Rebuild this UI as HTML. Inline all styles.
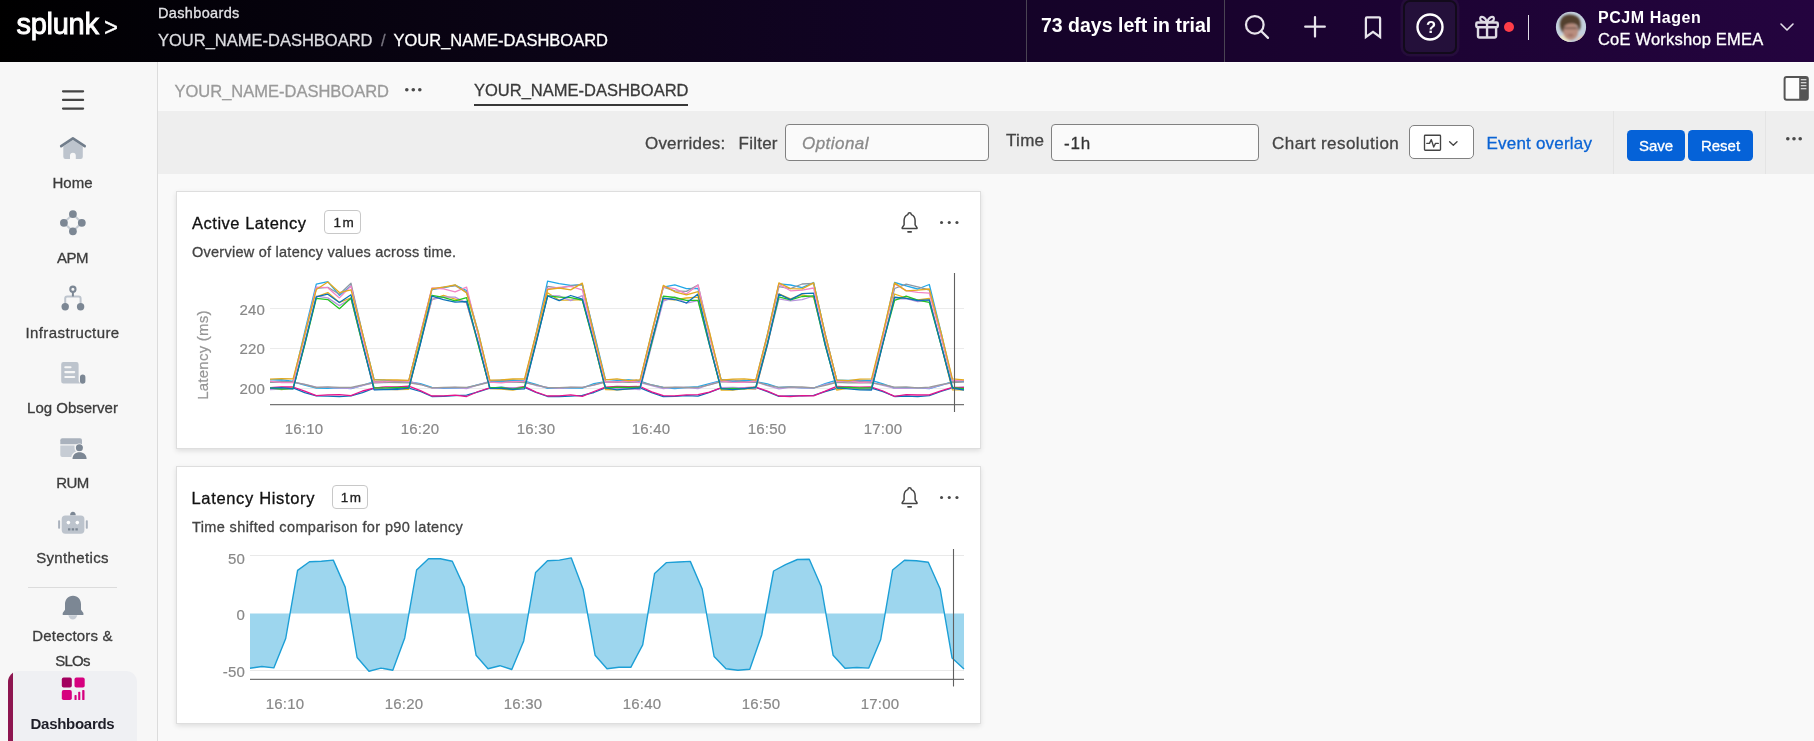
<!DOCTYPE html>
<html lang="en">
<head>
<meta charset="utf-8">
<title>YOUR_NAME-DASHBOARD</title>
<style>
*{box-sizing:border-box;margin:0;padding:0}
html,body{width:1814px;height:741px;overflow:hidden;background:#f9f9f9;font-family:"Liberation Sans",sans-serif;color:#3c3c3c}
.abs{position:absolute}
.t{position:absolute;white-space:nowrap;line-height:1;-webkit-text-stroke:.3px currentColor}
#hdr{position:absolute;left:0;top:0;width:1814px;height:62px;background:linear-gradient(90deg,#000 0%,#030108 10%,#0b0416 30%,#120325 50%,#18032c 65%,#1d0334 80%,#24043f 100%)}
#side{position:absolute;left:0;top:62px;width:158px;height:679px;background:#f7f7f7;border-right:1px solid #dcdcdc}
.nav{position:absolute;left:0;width:145px;text-align:center;font-size:15px;color:#3c3c3c;line-height:1;white-space:nowrap;-webkit-text-stroke:.3px currentColor}
#fbar{position:absolute;left:158px;top:111px;width:1656px;height:63px;background:#eeeeee}
.panel{position:absolute;left:176px;width:805px;background:#fff;border:1px solid #dedede;box-shadow:0 2px 5px rgba(0,0,0,.11)}
.inp{position:absolute;background:#fff;border:1px solid #818181;border-radius:4px}
.btn{-webkit-text-stroke:.3px #fff;position:absolute;background:#0562d8;border-radius:4.500px;color:#fff;font-size:15px;text-align:center}
.ax{font-size:15px;fill:#888;stroke:#888;stroke-width:.2px;letter-spacing:.15px;font-family:"Liberation Sans",sans-serif}
</style>
</head>
<body>
<div id="root" style="position:absolute;left:0;top:0;width:1814px;height:741px;will-change:transform">
<!-- HEADER -->
<div id="hdr">
  <div class="t" id="logo" style="left:16.600px;top:10.200px;font-size:29px;color:#fff;letter-spacing:-0.3px;-webkit-text-stroke:0.9px #fff">splunk</div>
  <div class="t" id="logogt" style="left:103.800px;top:12.300px;font-size:30px;color:#fff;transform-origin:0 50%;transform:scale(.8,.86);-webkit-text-stroke:0.4px #fff">&gt;</div>
  <div class="t" id="h1" style="left:158px;top:6px;font-size:14.5px;color:#e2e2e6;letter-spacing:0.35px">Dashboards</div>
  <div class="t" id="h2" style="left:158px;top:31.500px;font-size:16.5px;color:#dcdce0">YOUR_NAME-DASHBOARD</div>
  <div class="t" id="h3" style="left:381px;top:31.500px;font-size:16.5px;color:#77747f">/</div>
  <div class="t" id="h4" style="left:393.5px;top:31.500px;font-size:16.5px;color:#fff">YOUR_NAME-DASHBOARD</div>
  <div class="abs" style="left:1026px;top:0;width:1px;height:62px;background:#4a4453"></div>
  <div class="abs" style="left:1224px;top:0;width:1px;height:62px;background:#4a4453"></div>
  <div class="t" id="trial" style="-webkit-text-stroke:0;left:1041px;top:16.300px;font-size:19.5px;font-weight:bold;color:#fff">73 days left in trial</div>
  <!-- search / plus / bookmark -->
  <svg class="abs" style="left:1236px;top:6px" width="156" height="42" viewBox="1236 6 156 42" fill="none" stroke="#e8e5ec" stroke-width="2.250" stroke-linecap="round" stroke-linejoin="round">
    <circle cx="1254.800" cy="24.800" r="8.800"/><path d="M1261.300 31.300L1268 37.900"/>
    <path d="M1315 17V36.500M1305.200 26.700H1324.800"/>
    <path d="M1366.900 17.400H1379.100a1 1 0 0 1 1 1V37L1373 31.800L1365.900 37V18.400a1 1 0 0 1 1-1Z" stroke-linejoin="miter"/>
  </svg>
  <!-- help -->
  <div class="abs" style="left:1403px;top:0;width:54px;height:54px;background:#24103a;border:2px solid #120a1b;border-radius:7px;box-shadow:0 0 0 2.500px rgba(255,255,255,.045)"></div>
  <svg class="abs" style="left:1415.400px;top:12px" width="30" height="30" viewBox="0 0 30 30" fill="none" stroke="#fff" stroke-width="2.4"><circle cx="15" cy="15" r="12.5"/></svg>
  <div class="t" style="left:1426px;top:18.800px;font-size:16.500px;font-weight:bold;color:#fff;-webkit-text-stroke:0">?</div>
  <!-- gift -->
  <svg class="abs" style="left:1470px;top:10px" width="34" height="34" viewBox="1470 10 34 34" fill="none" stroke="#dedbe4" stroke-width="2.400" stroke-linejoin="round" stroke-linecap="round"><rect x="1476.300" y="22.500" width="21.500" height="4.800" rx="1.200"/><path d="M1478 27.300V36a1.500 1.500 0 0 0 1.500 1.500H1494.600a1.500 1.500 0 0 0 1.500-1.500V27.300M1487.050 22.500V37.500"/><path d="M1487 22.300C1485 16.400 1480.200 15.300 1480.200 18.800C1480.200 21.300 1483.800 22.300 1487 22.300ZM1487.100 22.300C1489.100 16.400 1493.900 15.300 1493.900 18.800C1493.900 21.300 1490.300 22.300 1487.100 22.300Z" stroke-width="2.200"/></svg>
  <div class="abs" style="left:1503.700px;top:21.800px;width:10.200px;height:10.200px;border-radius:50%;background:#ff3d48"></div>
  <div class="abs" style="left:1527.600px;top:15px;width:1.600px;height:25px;background:#e0dce6"></div>
  <!-- avatar -->
  <svg class="abs" style="left:1553px;top:9px" width="36" height="36" viewBox="1553 9 36 36">
    <defs><clipPath id="avc"><circle cx="1571" cy="26.900" r="15.100"/></clipPath><filter id="avb" x="-20%" y="-20%" width="140%" height="140%"><feGaussianBlur stdDeviation="1.05"/></filter></defs>
    <g clip-path="url(#avc)">
      <rect x="1553" y="9" width="36" height="36" fill="#c4d1de"/>
      <g filter="url(#avb)">
        <path d="M1555 37L1566 34.500L1572 46H1555Z" fill="#ece6cc"/>
        <path d="M1578 37.500L1588 34V46H1574Z" fill="#e6c3ae"/>
        <ellipse cx="1570.600" cy="31.200" rx="7.600" ry="8.800" fill="#b98d7e"/>
        <path d="M1560.300 27.500C1558.600 21 1562 15 1568.500 14.600C1575.500 14 1580.800 17.500 1580.600 24C1581.200 27 1580 30 1578.400 31.500C1578.800 27.500 1577.500 24.800 1574 23.800C1570 22.800 1565.500 24.200 1564.200 27C1563.300 29 1563.300 31 1563.600 33C1561.600 31.500 1560.800 29.500 1560.300 27.500Z" fill="#52402f"/>
        <path d="M1563.800 28.200H1577.200" stroke="#4a3732" stroke-width="1.100" fill="none"/>
        <ellipse cx="1570.500" cy="35.300" rx="3" ry="1" fill="#94655c"/>
      </g>
    </g>
  </svg>
  <div class="t" id="uname" style="-webkit-text-stroke:0;left:1598px;top:9.500px;font-size:16px;font-weight:bold;color:#fff;letter-spacing:0.55px">PCJM Hagen</div>
  <div class="t" id="uorg" style="left:1598px;top:30.800px;font-size:16.5px;color:#fff;letter-spacing:0.2px">CoE Workshop EMEA</div>
  <svg class="abs" style="left:1779.400px;top:21.200px" width="16" height="12" viewBox="0 0 16 12" fill="none" stroke="#e4e0ea" stroke-width="1.6" stroke-linecap="round" stroke-linejoin="round"><path d="M2 3l6 6 6-6"/></svg>
</div>

<div class="abs" style="left:0;top:62px;width:1814px;height:1px;background:#fdfdfd"></div>
<!-- SIDEBAR -->
<div id="side"></div>
<svg class="abs" style="left:56px;top:84px" width="34" height="32" viewBox="56 84 34 32" stroke="#444" stroke-width="2.200" stroke-linecap="round"><path d="M63 91.300H83.100M63 99.900H83.100M63 108.600H83.100"/></svg>
<div class="nav" style="top:175px"><span id="n0">Home</span></div>
<div class="nav" style="top:250px"><span id="n1" style="letter-spacing:-0.5px">APM</span></div>
<div class="nav" style="top:325px"><span id="n2" style="letter-spacing:0.42px">Infrastructure</span></div>
<div class="nav" style="top:400px"><span id="n3">Log Observer</span></div>
<div class="nav" style="top:475px"><span id="n4" style="letter-spacing:-0.5px">RUM</span></div>
<div class="nav" style="top:550px"><span id="n5" style="letter-spacing:0.35px">Synthetics</span></div>
<div class="abs" style="left:28px;top:587px;width:89px;height:1px;background:#dcdcdc"></div>
<div class="nav" style="top:628px"><span id="n6" style="letter-spacing:0.2px">Detectors &amp;</span></div>
<div class="nav" style="top:653px"><span id="n7" style="letter-spacing:-0.7px">SLOs</span></div>
<div class="abs" style="left:8px;top:671px;width:129px;height:82px;background:#eff0f3;border-radius:11px;overflow:hidden"><div class="abs" style="left:0;top:0;width:5px;height:82px;background:#8e1650"></div></div>
<div class="nav" style="top:716px;font-weight:bold;color:#1e1e28;-webkit-text-stroke:0"><span id="n8" style="letter-spacing:-0.28px">Dashboards</span></div>
<svg class="abs" style="left:0;top:62px" width="158" height="679" viewBox="0 62 158 679">
  <!-- home -->
  <path d="M63.300 146.500V156.800a2.200 2.200 0 0 0 2.200 2.200H70v-3.400a2.900 2.900 0 0 1 5.800 0V159h4.800a2.200 2.200 0 0 0 2.200-2.200V146.500L72.900 140z" fill="#bdc4cd"/>
  <path d="M61.200 146.200L72.900 138.400L84.700 146.200" fill="none" stroke="#717d8b" stroke-width="2.600" stroke-linecap="round" stroke-linejoin="round"/>
  <!-- apm -->
  <path d="M72.900 214.100L63.800 222.800L72.900 231.300L81.800 222.800Z" fill="none" stroke="#c6ccd4" stroke-width="2"/>
  <g fill="#7c8794"><circle cx="72.900" cy="214.100" r="3.900"/><circle cx="63.900" cy="222.800" r="3.900"/><circle cx="81.800" cy="222.800" r="3.900"/><circle cx="72.900" cy="231.300" r="3.900"/></g>
  <!-- infrastructure -->
  <path d="M65.200 304V298.500a2 2 0 0 1 2-2H78.600a2 2 0 0 1 2 2V304" fill="none" stroke="#bdc4cd" stroke-width="2"/>
  <path d="M72.900 292V296.500" stroke="#7c8794" stroke-width="2"/>
  <circle cx="72.900" cy="289.200" r="2.600" fill="#f7f7f7" stroke="#7c8794" stroke-width="2.100"/>
  <g fill="#7c8794"><circle cx="65.200" cy="306.800" r="3.700"/><circle cx="80.600" cy="306.800" r="3.700"/></g>
  <!-- log observer -->
  <path d="M63.400 362h13a2.200 2.200 0 0 1 2.200 2.200V380a3.400 3.400 0 0 0 3.400 3.400H63.400a2.200 2.200 0 0 1-2.200-2.200V364.200a2.200 2.200 0 0 1 2.200-2.200z" fill="#bdc4cd"/>
  <path d="M82.700 374.600a2.700 2.700 0 0 1 2.700 2.700V381a2.700 2.700 0 0 1-5.400 0V377.300a2.700 2.700 0 0 1 2.700-2.700z" fill="#7c8794"/>
  <g stroke="#f7f7f7" stroke-width="2.100" stroke-linecap="round"><path d="M65.300 367.200H70.500M65.300 372.100H74.200M65.300 377H74.200"/></g>
  <!-- rum -->
  <path d="M62.300 438.200H80a2 2 0 0 1 2 2V444.300H60.300V440.200a2 2 0 0 1 2-2z" fill="#aab2bd"/>
  <path d="M60.300 445.400H74.500V448a5.500 5.500 0 0 0 1.500 3.600C73 452.800 71.500 455 71.300 457H62.300a2 2 0 0 1-2-2z" fill="#c6ccd4"/>
  <circle cx="79.400" cy="447.700" r="3.500" fill="#7c8794" stroke="#f7f7f7" stroke-width="1.400" paint-order="stroke"/>
  <path d="M72.500 459C72.500 455 75.500 452.300 79.500 452.300S86.600 455 86.600 459z" fill="#7c8794" stroke="#f7f7f7" stroke-width="1.400" paint-order="stroke"/>
  <!-- synthetics -->
  <rect x="61.700" y="515.500" width="22.700" height="18.200" rx="3.600" fill="#bdc4cd"/>
  <path d="M70.100 515.300a2.800 3.600 0 0 1 5.600 0z" fill="#7c8794"/>
  <rect x="58.100" y="520.200" width="2" height="8.500" rx=".8" fill="#aab2bd"/>
  <rect x="85.800" y="520.200" width="2" height="8.500" rx=".8" fill="#aab2bd"/>
  <circle cx="68.400" cy="522.600" r="1.800" fill="#fff"/><circle cx="77.300" cy="522.600" r="1.800" fill="#fff"/>
  <path d="M68 529.400H70.400M71.700 529.400H74.100M75.400 529.400H77.800" stroke="#7c8794" stroke-width="2.200"/>
  <!-- bell -->
  <path d="M68.300 615.200H77.300C76.500 618 74.800 619.400 72.800 619.400S69.100 618 68.300 615.200z" fill="#c6ccd4"/>
  <path d="M73 595.800c-5 0-8 3.700-8 8.500v5.400l-2.300 3.400v1.800H83.400V613.100l-2.400-3.400V604.300c0-4.800-3-8.500-8-8.500z" fill="#7c8794"/>
  <!-- dashboards -->
  <rect x="61.800" y="677.600" width="10" height="10" rx="1.800" fill="#a3005f"/>
  <rect x="74.500" y="677.600" width="10.200" height="10" rx="1.800" fill="#d6007f"/>
  <rect x="61.800" y="690.100" width="10" height="10" rx="1.800" fill="#d6007f"/>
  <g fill="#d6007f"><rect x="74.500" y="695" width="2.100" height="5.100" rx=".7"/><rect x="78.200" y="691.800" width="2.100" height="8.300" rx=".7"/><rect x="82.200" y="690.100" width="2.300" height="10" rx=".7"/></g>
</svg>


<!-- TABS -->
<div class="t" id="tab1" style="left:174.500px;top:83px;font-size:16.5px;color:#9a9a9a">YOUR_NAME-DASHBOARD</div>
<svg class="abs" style="left:404.30px;top:86.60px" width="18.60" height="5.60" fill="#4a4a4a"><circle cx="2.80" cy="2.80" r="1.80"/><circle cx="9.30" cy="2.80" r="1.80"/><circle cx="15.80" cy="2.80" r="1.80"/></svg>
<div class="t" id="tab2" style="left:474px;top:82px;font-size:16.5px;color:#3a3a3a">YOUR_NAME-DASHBOARD</div>
<div class="abs" style="left:474px;top:104.200px;width:214px;height:1.500px;background:#383838"></div>
<svg class="abs" style="left:1782px;top:74px" width="30" height="30" viewBox="1782 74 30 30"><rect x="1784.600" y="77" width="23.200" height="22.800" rx="2" fill="#fcfcfc" stroke="#555" stroke-width="2"/><path d="M1799.200 77H1806.800a1 1 0 0 1 1 1V98.800a1 1 0 0 1-1 1H1799.200Z" fill="#555"/><path d="M1800.800 79.700H1806.400M1800.800 82.700H1806.400M1800.800 85.700H1806.400M1800.800 88.700H1806.400" stroke="#fcfcfc" stroke-width="1.100"/></svg>

<!-- FILTER BAR -->
<div id="fbar"></div>
<div class="t" id="f1" style="left:645px;top:135px;font-size:17px;color:#444;letter-spacing:0.2px">Overrides:</div>
<div class="t" id="f2" style="left:738.500px;top:135px;font-size:17px;color:#444;letter-spacing:0.25px">Filter</div>
<div class="inp" style="left:785px;top:124px;width:204px;height:37px;background:#fafafa"></div>
<div class="t" id="f3" style="left:802px;top:135px;font-size:17px;font-style:italic;color:#8a8a8a;letter-spacing:0.45px">Optional</div>
<div class="t" id="f4" style="left:1006px;top:132px;font-size:17px;color:#444;letter-spacing:0.3px">Time</div>
<div class="inp" style="left:1051px;top:124px;width:208px;height:37px;background:#fafafa"></div>
<div class="t" id="f5" style="left:1064px;top:135px;font-size:17px;color:#333;letter-spacing:0.8px">-1h</div>
<div class="t" id="f6" style="left:1272px;top:135px;font-size:17px;color:#444;letter-spacing:0.45px">Chart resolution</div>
<div class="inp" style="left:1409px;top:125px;width:65px;height:34px;border-radius:5px"></div>
<svg class="abs" style="left:1420px;top:130px" width="42" height="26" viewBox="1420 130 42 26" fill="none" stroke="#444" stroke-width="1.350" stroke-linejoin="round" stroke-linecap="round"><rect x="1424.500" y="135.200" width="16" height="15" rx=".8"/><path d="M1426.800 143.400H1429.500L1431.300 139.600L1433.700 147L1435.500 143.400H1438.300"/><path d="M1449.600 141.800L1453.300 145.300L1457 141.800"/></svg>
<div class="t" id="f7" style="left:1486.500px;top:135px;font-size:17px;color:#0a63d4;letter-spacing:0.2px">Event overlay</div>
<div class="abs" style="left:1613px;top:111px;width:1px;height:63px;background:#e4e4e4"></div>
<div class="abs" style="left:1765px;top:111px;width:1px;height:63px;background:#e4e4e4"></div>
<div class="btn" style="left:1627px;top:130px;width:58px;height:31px;line-height:31px">Save</div>
<div class="btn" style="left:1688px;top:130px;width:65px;height:31px;line-height:31px">Reset</div>
<svg class="abs" style="left:1784.50px;top:136.30px" width="18.00" height="5.60" fill="#4a4a4a"><circle cx="2.80" cy="2.80" r="1.80"/><circle cx="9.00" cy="2.80" r="1.80"/><circle cx="15.20" cy="2.80" r="1.80"/></svg>

<!-- PANEL 1 -->
<div class="panel" style="top:191px;height:258px"></div>
<div class="t" id="p1t" style="left:192px;top:215px;font-size:16.5px;color:#111;letter-spacing:0.52px">Active Latency</div>
<div class="abs" style="left:324px;top:210px;width:37px;height:24px;border:1px solid #c8c8c8;border-radius:4px;background:#fff"></div>
<div class="t" id="b1" style="left:333.400px;top:215.500px;font-size:13.500px;color:#222;letter-spacing:1.600px">1m</div>
<div class="t" id="p1s" style="left:192px;top:245px;font-size:14.5px;color:#444;letter-spacing:0.25px">Overview of latency values across time.</div>
<svg class="abs" style="left:895px;top:205px" width="30" height="30" viewBox="895 205 30 30" fill="none" stroke="#444" stroke-width="1.5" stroke-linejoin="round" stroke-linecap="round"><path d="M909.6 212.8C908.6 212.8 908 213.600 907.800 214.600C905.400 215.600 904.100 217.800 904.100 220.600V224.800L902.200 227.700V228.600H917V227.700L915.100 224.800V220.600C915.100 217.800 913.800 215.600 911.400 214.600C911.200 213.600 910.600 212.800 909.600 212.800Z"/><path d="M908 231.800H911.200" stroke-width="1.700"/></svg>
<svg class="abs" style="left:939.25px;top:219.95px" width="20.50" height="5.10" fill="#4a4a4a"><circle cx="2.55" cy="2.55" r="1.55"/><circle cx="10.25" cy="2.55" r="1.55"/><circle cx="17.95" cy="2.55" r="1.55"/></svg>

<!-- PANEL 2 -->
<div class="panel" style="top:466px;height:258px"></div>
<div class="t" id="p2t" style="left:191.500px;top:490px;font-size:16.5px;color:#111;letter-spacing:0.66px">Latency History</div>
<div class="abs" style="left:332px;top:485px;width:36px;height:24px;border:1px solid #c8c8c8;border-radius:4px;background:#fff"></div>
<div class="t" id="b2" style="left:340.700px;top:490.500px;font-size:13.500px;color:#222;letter-spacing:1.600px">1m</div>
<div class="t" id="p2s" style="left:192px;top:520px;font-size:14.5px;color:#444;letter-spacing:0.375px">Time shifted comparison for p90 latency</div>
<svg class="abs" style="left:895px;top:480px" width="30" height="30" viewBox="895 205 30 30" fill="none" stroke="#444" stroke-width="1.5" stroke-linejoin="round" stroke-linecap="round"><path d="M909.6 212.8C908.6 212.8 908 213.600 907.800 214.600C905.400 215.600 904.100 217.800 904.100 220.600V224.800L902.200 227.700V228.600H917V227.700L915.100 224.800V220.600C915.100 217.800 913.800 215.600 911.400 214.600C911.200 213.600 910.600 212.800 909.600 212.800Z"/><path d="M908 231.800H911.200" stroke-width="1.700"/></svg>
<svg class="abs" style="left:939.25px;top:494.95px" width="20.50" height="5.10" fill="#4a4a4a"><circle cx="2.55" cy="2.55" r="1.55"/><circle cx="10.25" cy="2.55" r="1.55"/><circle cx="17.95" cy="2.55" r="1.55"/></svg>

<!-- CHARTS -->
<svg class="abs" style="left:0;top:0;pointer-events:none" width="1814" height="741" viewBox="0 0 1814 741">
  <!-- chart 1 -->
  <g stroke="#ebebeb" stroke-width="1"><path d="M270 308.500H964M270 348.500H964M270 388.500H964"/></g>
  <g>
<polyline points="270.0,388.3 281.6,388.6 293.1,387.8 304.7,392.6 316.3,395.9 327.8,396.2 339.4,396.6 351.0,395.9 362.5,392.7 374.1,388.1 385.7,388.7 397.2,388.6 408.8,388.1 420.4,391.5 431.9,396.5 443.5,396.4 455.1,395.7 466.6,395.2 478.2,391.8 489.8,388.2 501.3,387.2 512.9,388.7 524.5,387.4 536.0,392.3 547.6,396.5 559.2,396.5 570.7,396.2 582.3,395.4 593.9,392.5 605.4,387.9 617.0,387.8 628.6,388.2 640.1,387.9 651.7,392.7 663.3,396.6 674.8,396.4 686.4,395.7 698.0,396.1 709.5,392.3 721.1,387.9 732.7,388.1 744.2,388.3 755.8,387.5 767.4,391.7 778.9,396.3 790.5,395.8 802.1,395.9 813.6,395.3 825.2,391.6 836.8,388.3 848.3,387.2 859.9,388.6 871.5,388.1 883.0,391.6 894.6,396.5 906.2,396.0 917.7,396.7 929.3,395.7 940.9,391.5 952.4,387.9 964.0,387.4" fill="none" stroke="#0b72b8" stroke-width="1.3" stroke-linejoin="round"/>
<polyline points="270.0,387.6 281.6,386.8 293.1,387.0 304.7,391.2 316.3,395.6 327.8,394.9 339.4,394.7 351.0,395.6 362.5,391.0 374.1,388.1 385.7,386.8 397.2,386.9 408.8,386.2 420.4,390.7 431.9,396.0 443.5,395.8 455.1,395.2 466.6,396.5 478.2,391.5 489.8,387.9 501.3,388.0 512.9,388.1 524.5,386.7 536.0,392.1 547.6,396.0 559.2,395.8 570.7,394.8 582.3,396.4 593.9,391.5 605.4,387.1 617.0,386.4 628.6,386.6 640.1,386.5 651.7,391.8 663.3,395.7 674.8,395.8 686.4,394.8 698.0,394.6 709.5,392.1 721.1,387.8 732.7,387.7 744.2,387.7 755.8,387.2 767.4,391.2 778.9,396.0 790.5,396.5 802.1,395.7 813.6,395.8 825.2,391.2 836.8,386.3 848.3,386.8 859.9,387.2 871.5,387.0 883.0,391.0 894.6,396.4 906.2,394.7 917.7,395.0 929.3,394.8 940.9,390.8 952.4,387.4 964.0,387.4" fill="none" stroke="#e6128c" stroke-width="1.3" stroke-linejoin="round"/>
<polyline points="270.0,381.8 281.6,380.8 293.1,381.9 304.7,385.2 316.3,388.2 327.8,388.3 339.4,387.9 351.0,388.5 362.5,385.3 374.1,381.7 385.7,381.8 397.2,381.3 408.8,382.0 420.4,383.6 431.9,387.4 443.5,388.3 455.1,388.1 466.6,387.9 478.2,384.6 489.8,381.8 501.3,380.4 512.9,380.1 524.5,381.1 536.0,384.4 547.6,388.4 559.2,388.4 570.7,387.9 582.3,388.1 593.9,383.7 605.4,381.7 617.0,382.0 628.6,380.2 640.1,381.0 651.7,385.0 663.3,387.5 674.8,388.5 686.4,387.5 698.0,386.7 709.5,383.6 721.1,380.7 732.7,381.5 744.2,381.3 755.8,381.7 767.4,383.8 778.9,387.5 790.5,387.0 802.1,387.9 813.6,388.2 825.2,383.7 836.8,380.1 848.3,380.4 859.9,380.4 871.5,380.4 883.0,383.9 894.6,388.1 906.2,387.6 917.7,387.9 929.3,388.5 940.9,385.3 952.4,381.5 964.0,381.5" fill="none" stroke="#23a8e8" stroke-width="1.3" stroke-linejoin="round"/>
<polyline points="270.0,381.7 281.6,381.3 293.1,382.1 304.7,384.3 316.3,387.2 327.8,387.3 339.4,388.2 351.0,388.4 362.5,385.5 374.1,382.5 385.7,382.5 397.2,381.8 408.8,381.4 420.4,384.5 431.9,388.0 443.5,387.8 455.1,387.5 466.6,388.7 478.2,384.8 489.8,381.4 501.3,381.6 512.9,381.6 524.5,382.1 536.0,385.5 547.6,387.5 559.2,388.3 570.7,387.5 582.3,387.3 593.9,385.2 605.4,382.2 617.0,381.3 628.6,381.7 640.1,382.6 651.7,385.6 663.3,388.6 674.8,387.4 686.4,387.5 698.0,388.6 709.5,384.5 721.1,381.3 732.7,381.8 744.2,382.3 755.8,382.0 767.4,385.6 778.9,388.8 790.5,387.3 802.1,387.8 813.6,388.0 825.2,384.3 836.8,382.2 848.3,381.5 859.9,381.5 871.5,382.5 883.0,385.4 894.6,388.3 906.2,388.4 917.7,387.9 929.3,388.4 940.9,385.2 952.4,382.6 964.0,381.4" fill="none" stroke="#b796dc" stroke-width="1.3" stroke-linejoin="round"/>
<polyline points="270.0,382.4 281.6,382.3 293.1,382.1 304.7,384.3 316.3,387.5 327.8,386.9 339.4,387.4 351.0,387.4 362.5,384.8 374.1,382.8 385.7,382.3 397.2,382.6 408.8,382.8 420.4,384.5 431.9,387.8 443.5,387.4 455.1,387.1 466.6,387.3 478.2,385.0 489.8,382.2 501.3,382.2 512.9,381.9 524.5,382.7 536.0,384.8 547.6,387.7 559.2,387.7 570.7,387.1 582.3,387.4 593.9,384.8 605.4,381.9 617.0,381.8 628.6,382.3 640.1,382.1 651.7,384.8 663.3,387.4 674.8,387.2 686.4,387.5 698.0,387.4 709.5,384.9 721.1,381.7 732.7,382.0 744.2,381.8 755.8,381.7 767.4,385.1 778.9,387.3 790.5,386.9 802.1,387.0 813.6,387.8 825.2,385.3 836.8,382.3 848.3,382.8 859.9,382.6 871.5,382.8 883.0,384.6 894.6,387.1 906.2,386.9 917.7,387.8 929.3,387.1 940.9,384.6 952.4,382.7 964.0,381.8" fill="none" stroke="#9a9a9a" stroke-width="1.3" stroke-linejoin="round"/>
<polyline points="270.0,387.9 281.6,389.7 293.1,387.9 304.7,343.7 316.3,296.8 327.8,292.6 339.4,302.5 351.0,297.8 362.5,343.6 374.1,389.0 385.7,389.4 397.2,389.7 408.8,389.4 420.4,342.5 431.9,299.7 443.5,295.4 455.1,299.1 466.6,302.7 478.2,344.0 489.8,388.7 501.3,389.0 512.9,390.0 524.5,387.8 536.0,342.2 547.6,292.7 559.2,300.2 570.7,300.2 582.3,299.6 593.9,342.2 605.4,389.5 617.0,389.9 628.6,389.2 640.1,388.0 651.7,342.1 663.3,299.2 674.8,299.9 686.4,298.0 698.0,297.2 709.5,342.5 721.1,390.0 732.7,390.0 744.2,388.5 755.8,389.2 767.4,345.0 778.9,293.9 790.5,298.8 802.1,294.8 813.6,297.3 825.2,341.9 836.8,390.0 848.3,388.1 859.9,389.1 871.5,389.4 883.0,343.1 894.6,294.0 906.2,298.2 917.7,300.0 929.3,298.5 940.9,344.4 952.4,389.9 964.0,389.8" fill="none" stroke="#e3b023" stroke-width="1.3" stroke-linejoin="round"/>
<polyline points="270.0,389.5 281.6,389.1 293.1,388.8 304.7,344.3 316.3,296.1 327.8,297.9 339.4,305.6 351.0,298.6 362.5,344.1 374.1,389.5 385.7,389.0 397.2,389.6 408.8,387.8 420.4,343.3 431.9,299.5 443.5,296.8 455.1,297.1 466.6,303.0 478.2,342.3 489.8,388.6 501.3,388.4 512.9,387.6 524.5,388.7 536.0,343.5 547.6,295.6 559.2,295.8 570.7,300.6 582.3,295.7 593.9,342.7 605.4,388.1 617.0,388.6 628.6,388.8 640.1,389.5 651.7,345.0 663.3,301.2 674.8,297.2 686.4,303.1 698.0,300.7 709.5,345.2 721.1,387.6 732.7,387.5 744.2,388.0 755.8,388.9 767.4,344.6 778.9,298.9 790.5,300.9 802.1,299.7 813.6,296.0 825.2,344.5 836.8,387.3 848.3,387.3 859.9,388.3 871.5,389.0 883.0,341.7 894.6,298.8 906.2,298.5 917.7,301.6 929.3,300.4 940.9,343.6 952.4,388.4 964.0,389.1" fill="none" stroke="#b796dc" stroke-width="1.3" stroke-linejoin="round"/>
<polyline points="270.0,388.0 281.6,389.2 293.1,388.6 304.7,345.0 316.3,298.3 327.8,299.6 339.4,308.7 351.0,297.9 362.5,344.4 374.1,387.8 385.7,387.9 397.2,387.4 408.8,387.6 420.4,342.5 431.9,295.3 443.5,297.4 455.1,300.8 466.6,297.6 478.2,344.7 489.8,387.5 501.3,387.7 512.9,389.1 524.5,387.2 536.0,341.8 547.6,295.9 559.2,297.2 570.7,297.7 582.3,300.0 593.9,343.2 605.4,388.0 617.0,387.2 628.6,387.3 640.1,387.2 651.7,343.0 663.3,296.2 674.8,297.5 686.4,300.4 698.0,300.4 709.5,345.2 721.1,388.9 732.7,388.3 744.2,388.9 755.8,387.2 767.4,343.1 778.9,296.9 790.5,299.9 802.1,296.5 813.6,295.8 825.2,345.3 836.8,387.3 848.3,387.4 859.9,388.0 871.5,387.9 883.0,342.7 894.6,300.4 906.2,296.2 917.7,300.2 929.3,302.4 940.9,344.3 952.4,387.5 964.0,388.7" fill="none" stroke="#22c322" stroke-width="1.3" stroke-linejoin="round"/>
<polyline points="270.0,388.2 281.6,387.7 293.1,388.8 304.7,343.7 316.3,296.9 327.8,294.2 339.4,302.5 351.0,294.8 362.5,342.7 374.1,389.8 385.7,389.6 397.2,389.4 408.8,388.2 420.4,344.0 431.9,296.2 443.5,299.6 455.1,302.2 466.6,301.5 478.2,342.6 489.8,388.3 501.3,388.4 512.9,389.3 524.5,388.8 536.0,343.4 547.6,296.0 559.2,300.7 570.7,295.5 582.3,299.1 593.9,341.3 605.4,387.8 617.0,389.9 628.6,388.9 640.1,388.0 651.7,341.4 663.3,298.1 674.8,299.5 686.4,303.0 698.0,294.1 709.5,344.4 721.1,388.6 732.7,389.6 744.2,388.7 755.8,387.7 767.4,344.7 778.9,294.1 790.5,299.6 802.1,293.6 813.6,293.1 825.2,344.3 836.8,387.8 848.3,388.8 859.9,389.9 871.5,390.0 883.0,343.3 894.6,297.1 906.2,298.3 917.7,300.5 929.3,299.9 940.9,344.0 952.4,388.0 964.0,390.0" fill="none" stroke="#0b72b8" stroke-width="1.3" stroke-linejoin="round"/>
<polyline points="270.0,379.9 281.6,379.6 293.1,381.4 304.7,331.9 316.3,284.1 327.8,281.6 339.4,295.4 351.0,285.8 362.5,334.0 374.1,379.3 385.7,380.2 397.2,380.8 408.8,380.6 420.4,334.5 431.9,289.4 443.5,287.9 455.1,285.1 466.6,290.5 478.2,331.9 489.8,381.1 501.3,381.0 512.9,380.4 524.5,381.2 536.0,334.1 547.6,281.2 559.2,283.7 570.7,285.3 582.3,284.7 593.9,332.0 605.4,379.4 617.0,380.3 628.6,379.9 640.1,381.5 651.7,332.7 663.3,287.2 674.8,284.8 686.4,288.6 698.0,288.5 709.5,335.4 721.1,379.4 732.7,381.3 744.2,380.5 755.8,380.8 767.4,334.4 778.9,283.9 790.5,285.0 802.1,287.7 813.6,282.5 825.2,334.4 836.8,380.3 848.3,380.7 859.9,381.2 871.5,381.3 883.0,334.8 894.6,282.5 906.2,285.8 917.7,289.0 929.3,284.5 940.9,331.6 952.4,380.6 964.0,381.3" fill="none" stroke="#23a8e8" stroke-width="1.3" stroke-linejoin="round"/>
<polyline points="270.0,381.8 281.6,382.0 293.1,381.4 304.7,336.0 316.3,288.4 327.8,287.3 339.4,294.3 351.0,283.3 362.5,333.4 374.1,381.3 385.7,381.3 397.2,381.0 408.8,381.3 420.4,335.0 431.9,289.5 443.5,287.2 455.1,285.8 466.6,292.1 478.2,334.4 489.8,380.7 501.3,380.2 512.9,381.7 524.5,381.6 536.0,335.4 547.6,286.4 559.2,288.1 570.7,285.9 582.3,284.6 593.9,332.9 605.4,382.2 617.0,382.2 628.6,380.6 640.1,380.1 651.7,334.5 663.3,287.2 674.8,290.9 686.4,291.4 698.0,285.0 709.5,333.1 721.1,380.2 732.7,379.9 744.2,381.7 755.8,382.0 767.4,335.8 778.9,286.6 790.5,288.6 802.1,284.0 813.6,283.4 825.2,333.8 836.8,380.4 848.3,381.2 859.9,380.9 871.5,382.1 883.0,333.3 894.6,288.5 906.2,284.1 917.7,286.8 929.3,290.0 940.9,335.9 952.4,381.6 964.0,380.7" fill="none" stroke="#8d97a3" stroke-width="1.3" stroke-linejoin="round"/>
<polyline points="270.0,381.2 281.6,382.6 293.1,382.7 304.7,335.1 316.3,287.1 327.8,287.7 339.4,297.9 351.0,286.0 362.5,337.1 374.1,382.1 385.7,381.7 397.2,380.6 408.8,381.3 420.4,333.7 431.9,288.0 443.5,288.9 455.1,291.8 466.6,287.1 478.2,334.4 489.8,382.1 501.3,382.8 512.9,381.7 524.5,381.2 536.0,335.5 547.6,288.7 559.2,287.4 570.7,286.4 582.3,289.9 593.9,337.0 605.4,382.0 617.0,381.8 628.6,381.2 640.1,382.4 651.7,334.0 663.3,286.9 674.8,288.7 686.4,294.1 698.0,285.0 709.5,335.9 721.1,380.9 732.7,382.3 744.2,382.3 755.8,381.0 767.4,336.0 778.9,284.2 790.5,290.8 802.1,290.2 813.6,288.0 825.2,335.5 836.8,381.3 848.3,380.6 859.9,382.5 871.5,381.9 883.0,336.3 894.6,284.0 906.2,290.6 917.7,292.3 929.3,293.2 940.9,335.6 952.4,380.7 964.0,380.7" fill="none" stroke="#f285c5" stroke-width="1.3" stroke-linejoin="round"/>
<polyline points="270.0,379.2 281.6,378.7 293.1,378.8 304.7,334.4 316.3,289.5 327.8,282.0 339.4,292.6 351.0,289.9 362.5,333.1 374.1,379.9 385.7,379.9 397.2,380.0 408.8,380.3 420.4,335.7 431.9,288.7 443.5,287.1 455.1,284.8 466.6,293.0 478.2,331.9 489.8,380.2 501.3,379.9 512.9,379.0 524.5,379.0 536.0,334.0 547.6,289.7 559.2,288.0 570.7,289.9 582.3,283.1 593.9,334.9 605.4,379.9 617.0,378.9 628.6,380.6 640.1,379.8 651.7,332.5 663.3,285.4 674.8,291.8 686.4,294.8 698.0,291.6 709.5,332.0 721.1,380.1 732.7,379.2 744.2,378.9 755.8,380.0 767.4,334.6 778.9,282.8 790.5,288.7 802.1,288.8 813.6,282.9 825.2,334.4 836.8,380.1 848.3,380.6 859.9,379.2 871.5,378.8 883.0,333.2 894.6,282.9 906.2,290.9 917.7,290.1 929.3,289.0 940.9,331.9 952.4,378.8 964.0,379.9" fill="none" stroke="#e3a91f" stroke-width="1.3" stroke-linejoin="round"/>
  </g>
  <path d="M270 404.600H964" stroke="#757575" stroke-width="1.200"/>
  <path d="M954.500 273V412" stroke="#606060" stroke-width="1.100"/>
  <g class="ax" text-anchor="end"><text x="265" y="315">240</text><text x="265" y="354">220</text><text x="265" y="394">200</text></g>
  <text class="ax" transform="translate(208.300,355) rotate(-90)" text-anchor="middle" style="fill:#9a9a9a;letter-spacing:.25px">Latency (ms)</text>
  <g class="ax" text-anchor="middle"><text x="304" y="434">16:10</text><text x="420" y="434">16:20</text><text x="536" y="434">16:30</text><text x="651" y="434">16:40</text><text x="767" y="434">16:50</text><text x="883" y="434">17:00</text></g>
  <!-- chart 2 -->
  <g stroke="#e9e9e9" stroke-width="1"><path d="M250 555.5H964M250 670.5H964"/></g>
  <polygon points="250.0,613.4 250.0,668.3 261.9,666.5 273.8,667.9 285.7,638.5 297.6,570.4 309.5,561.8 321.4,561.2 333.3,560.1 345.2,587.1 357.1,657.5 369.0,671.2 380.9,668.1 392.8,670.2 404.7,637.9 416.6,570.0 428.5,558.7 440.4,558.7 452.3,561.2 464.2,587.1 476.1,655.2 488.0,668.7 499.9,665.7 511.8,669.5 523.7,640.9 535.6,572.4 547.5,560.7 559.4,560.1 571.3,557.9 583.2,589.6 595.1,655.2 607.0,668.7 618.9,667.3 630.8,667.3 642.7,644.8 654.6,573.4 666.5,562.6 678.4,562.0 690.3,561.4 702.2,589.0 714.1,656.5 726.0,668.7 737.9,670.2 749.8,669.3 761.7,635.0 773.6,571.0 785.5,564.6 797.4,559.5 809.3,559.3 821.2,586.5 833.1,655.2 845.0,668.3 856.9,667.5 868.8,668.1 880.7,639.5 892.6,570.0 904.5,560.3 916.4,560.7 928.3,562.2 940.2,589.0 952.1,658.1 964.0,668.9 964.0,613.4" fill="#9dd6ee"/>
  <polyline points="250.0,668.3 261.9,666.5 273.8,667.9 285.7,638.5 297.6,570.4 309.5,561.8 321.4,561.2 333.3,560.1 345.2,587.1 357.1,657.5 369.0,671.2 380.9,668.1 392.8,670.2 404.7,637.9 416.6,570.0 428.5,558.7 440.4,558.7 452.3,561.2 464.2,587.1 476.1,655.2 488.0,668.7 499.9,665.7 511.8,669.5 523.7,640.9 535.6,572.4 547.5,560.7 559.4,560.1 571.3,557.9 583.2,589.6 595.1,655.2 607.0,668.7 618.9,667.3 630.8,667.3 642.7,644.8 654.6,573.4 666.5,562.6 678.4,562.0 690.3,561.4 702.2,589.0 714.1,656.5 726.0,668.7 737.9,670.2 749.8,669.3 761.7,635.0 773.6,571.0 785.5,564.6 797.4,559.5 809.3,559.3 821.2,586.5 833.1,655.2 845.0,668.3 856.9,667.5 868.8,668.1 880.7,639.5 892.6,570.0 904.5,560.3 916.4,560.7 928.3,562.2 940.2,589.0 952.1,658.1 964.0,668.9" fill="none" stroke="#1c9fd6" stroke-width="1.4" stroke-linejoin="round"/>
  <path d="M250 679.400H964" stroke="#757575" stroke-width="1.200"/>
  <path d="M953.500 549V686.500" stroke="#606060" stroke-width="1.100"/>
  <g class="ax" text-anchor="end"><text x="245" y="564">50</text><text x="245" y="620">0</text><text x="245" y="677">-50</text></g>
  <g class="ax" text-anchor="middle"><text x="285" y="709">16:10</text><text x="404" y="709">16:20</text><text x="523" y="709">16:30</text><text x="642" y="709">16:40</text><text x="761" y="709">16:50</text><text x="880" y="709">17:00</text></g>
</svg>
</div>
</body>
</html>
